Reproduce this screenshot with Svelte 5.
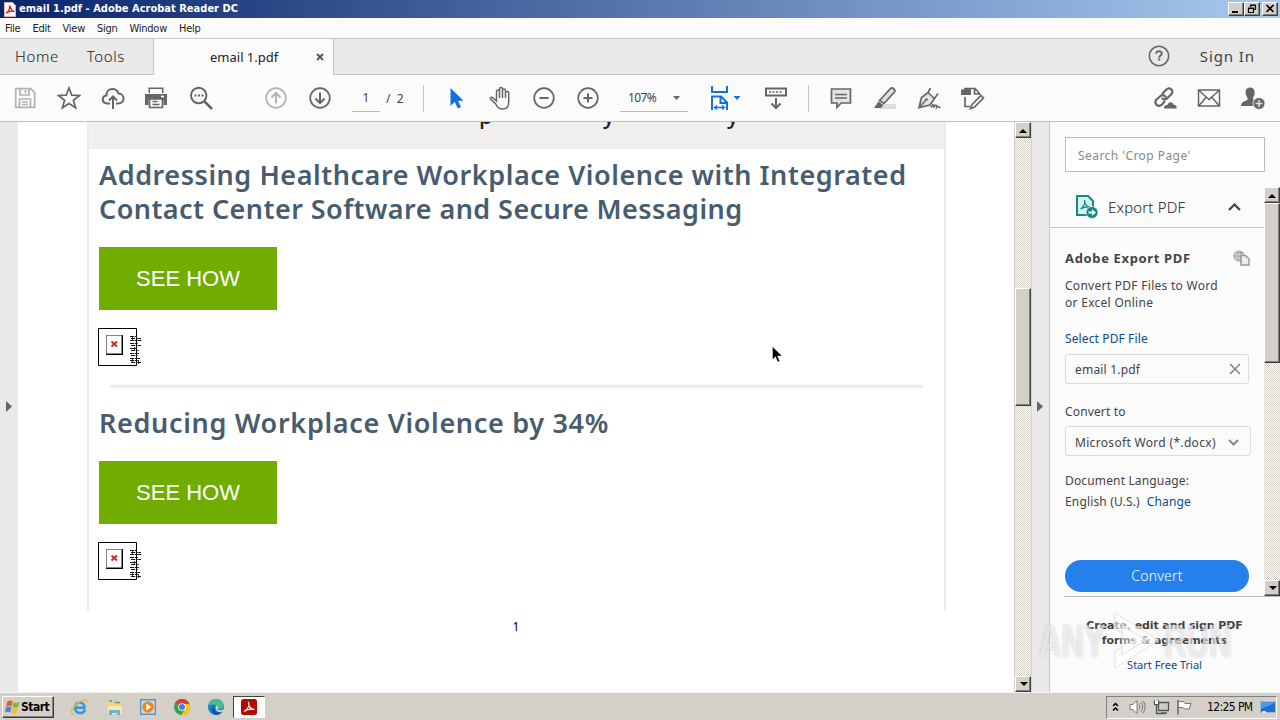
<script>
  const menus = ['File', 'Edit', 'View', 'Sign', 'Window', 'Help'];
</script>

{#snippet arrow(up)}
  <span class="sb-btn"><svg width="9" height="5" viewBox="0 0 9 5"><path d={up ? 'M0 5h8L4 1z' : 'M1 0h8L5 4z'} fill="#000" /></svg></span>
{/snippet}

{#snippet broken()}
  <div class="broken">
    <svg width="46" height="40" viewBox="0 0 46 40">
      <path d="M.5 1.5h38v37H.5z" fill="#fff" stroke="#000" />
      <path d="M8 8h17v20H8z" fill="#000" />
      <path d="M8.500 8.500h15v18h-15z" fill="#fff" stroke="#778c80" />
      <path d="m13.500 14.500 5.500 5m0-5-5.500 5" stroke="#c8282c" stroke-width="2" />
      <g stroke="#111" stroke-width="1.200" fill="none">
        <path d="M32 9.500h7M33 11.500h10M32 13.500h12M32 16.500h8M33 18.500h10M32 21.500h7M33 23.500h8M32 26.500h9M33 28.500h7M32 31.500h10M32 33.500h8M33 35.500h10" stroke-dasharray="4 .7 2 .5" />
        <path d="M34.500 10v4M36.500 20v4M34.500 31v4M40.500 33v4" stroke-width=".8" />
      </g>
    </svg>
  </div>
{/snippet}

<div class="screen">
  <header class="title">
    <svg class="app" width="12" height="15" viewBox="0 0 12 15"><path d="M.5.5h8L11.500 3.500v11H.5z" fill="#fff" stroke="#e7b5ad" /><path d="M2 11C5 9 6 6 5.500 3.500c2 5 3 6 5 6C7 8.500 5 9 2 11z" fill="none" stroke="#c8201c" stroke-width="1.300" /></svg>
    <b>email 1.pdf - Adobe Acrobat Reader DC</b>
    <div class="winbtns">
      <span><svg width="14" height="12"><path d="M3 8h6v2H3z" /></svg></span>
      <span><svg width="14" height="12"><path d="M5.500 4V2.500h5v4H9M5 2h6M3.500 5.500h5v4h-5zM3 5h6" fill="none" stroke="#000" stroke-width="1.200" /></svg></span>
      <span class="close"><svg width="14" height="12"><path d="m3.500 2 7 7m0-7-7 7" stroke="#000" stroke-width="1.700" /></svg></span>
    </div>
  </header>
  <nav class="menu">{#each menus as m}<span>{m}</span>{/each}</nav>

  <div class="tabs">
    <div class="home"><span>Home</span><span class="tools">Tools</span></div>
    <div class="tab"><span>email 1.pdf</span><svg width="8" height="8" viewBox="0 0 8 8"><path d="m1 1 6 6m0-6L1 7" stroke="#555" stroke-width="2" /></svg></div>
    <div class="right">
      <svg width="22" height="22" viewBox="0 0 22 22" fill="none" stroke="#666"><circle cx="11" cy="11" r="9.700" stroke-width="1.600" /><path d="M8.200 8.700c0-3.500 5.600-3.400 5.600-.2 0 2-2.700 2-2.700 4.300" stroke-width="1.900" /><path d="M10 14.500h2.200" stroke-width="2" /></svg>
      <span>Sign In</span>
    </div>
  </div>

  <div class="toolbar">
    <span class="cell dim"><svg viewBox="0 0 24 24"><path d="M2.700 2.700h15l4 4v14.600h-19zM7 3v6h9V3M12.500 4v3M6.500 21v-8h11v8M9 16h6M9 18.500h6" /></svg></span>
    <span class="cell"><svg viewBox="0 0 24 24"><path d="m12 2 2.800 7.200 7.700.3-6.100 4.800 2.200 7.500L12 17.500l-6.600 4.300 2.200-7.500-6.100-4.800 7.700-.3z" /></svg></span>
    <span class="cell"><svg viewBox="0 0 24 24"><path d="M9 17.500H6.500C.5 17.500.3 10 5.500 9.500 5 1.500 16 1 17.500 7.500c6.500.3 7 10-.5 10h-2M12 23V10.500M8 14.500l4-4 4 4" stroke-width="2" /></svg></span>
    <span class="cell"><svg viewBox="0 0 24 24"><path d="M3.500 1.500h15V7h-15zM0 8h22v11h-3.500v-5h-15v5H0z" fill="#666" stroke="none" /><path d="M5 3h12v5H5z" fill="#fbfbfb" stroke="none" /><path d="M4.500 13h13v8.500h-13z" fill="#fbfbfb" /><path d="M7.500 15.500h5M7.500 18.500h7" stroke-width="1.300" /><path d="M16 10.500h3" stroke="#fff" /></svg></span>
    <span class="cell"><svg viewBox="0 0 24 24"><circle cx="9.700" cy="9.500" r="7.700" stroke-width="2" /><path d="m15.500 15.500 7.500 7.500" stroke-width="2.500" /><path d="M5.500 9.500h2m1.500 0h2m1.500 0h2" stroke-width="1.800" /></svg></span>
    <span class="cell dim g1"><svg viewBox="0 0 24 24"><circle cx="12" cy="12" r="9.800" /><path d="M12 17.500V7M7.500 11.500 12 7l4.500 4.500" stroke-width="2" /></svg></span>
    <span class="cell"><svg viewBox="0 0 24 24"><circle cx="12" cy="12" r="9.800" /><path d="M12 6.500V17M7.500 12.500 12 17l4.500-4.500" stroke-width="2" /></svg></span>
    <span class="page">1</span><span class="of">/&nbsp; 2</span>
    <i class="sep s1"></i>
    <span class="cell"><svg viewBox="0 0 24 24"><path d="M6.500 2v18l4.300-4 3 6.500 3.200-1.500-3-6.300h5.500z" fill="#1373d9" stroke="none" /></svg></span>
    <span class="cell"><svg viewBox="0 0 24 24"><path d="M8.500 13.500v-8c0-2 3-2 3 0V3c0-2 3-2 3 0v1.500c0-2 3-2 3 0V7c0-2 3.200-2 3.200 0v9c0 9-10 9-13 2L2.500 13c-.8-1.600 1.300-2.500 2.500-1l3.500 3v-3M11.500 5v7m3-8v8m3-6v6" stroke-width="1.500" /></svg></span>
    <span class="cell"><svg viewBox="0 0 24 24"><circle cx="12" cy="12" r="9.800" /><path d="M7.500 12h9" stroke-width="2" /></svg></span>
    <span class="cell"><svg viewBox="0 0 24 24"><circle cx="12" cy="12" r="9.800" /><path d="M7.500 12h9M12 7.500v9" stroke-width="2" /></svg></span>
    <span class="zoom"><span>107%</span><svg width="7" height="4" viewBox="0 0 7 4"><path d="M0 0h7L3.500 4z" fill="#666" /></svg></span>
    <span class="fit">
      <svg width="32" height="28" viewBox="0 0 32 28" fill="none" stroke="#1473d6" stroke-width="2"><path d="M3 2v6h15V2M3 26V12.500h9l6 6V26M11.500 12.500v6.500H18" /><path d="M5.500 23.500h10M8 21.500l-2.500 2 2.500 2M13 21.500l2.500 2-2.500 2" stroke-width="1.300" /><path d="M24.500 12h7L28 16z" fill="#1473d6" stroke="none" /></svg>
    </span>
    <span class="cell"><svg viewBox="0 0 24 24"><path d="M2 2.500h20v7H2zM12 12v10M7.500 17.500 12 22l4.500-4.500" stroke-width="2" /><path d="M5 6h14" stroke-dasharray="2 1.500" /></svg></span>
    <i class="sep s2"></i>
    <span class="cell"><svg viewBox="0 0 24 24"><path d="M2.500 3h19v14H12l-4 4.500V17H2.500z" fill="#e4e4e4" /><path d="M6 8.500h12M6 12h12" stroke-width="1.500" /></svg></span>
    <span class="cell"><svg viewBox="0 0 24 24"><path d="M11 18h12v5H7z" fill="#ddd" stroke="none" /><path d="m6.500 14.500 11-12c1.500-1.500 5.500 1 4 3.500L11 17.500z" fill="#ddd" /><path d="m5.500 15.500 5 3.500L8 22H1z" fill="#666" stroke="none" /></svg></span>
    <span class="cell"><svg viewBox="0 0 24 24"><path d="M2 21.500 4.500 11.500l6.500-5 6.500 6-4.500 6.500zM11 6.500 13.500 2M17.500 12.500l3.500-5" fill="#e4e4e4" /><path d="m2.500 21 6.500-7" stroke-width="1.400" /><circle cx="9.500" cy="13.500" r="1.300" fill="#666" stroke="none" /><path d="M14 21.500c3-5 3-2 2.500 0 3-5 3-1 3 0 2-3 1 0 4 0" stroke-width="1.500" /></svg></span>
    <span class="cell"><svg viewBox="0 0 24 24"><path d="M0 3.500h3V1.800h7V9H0z" fill="#666" stroke="none" /><path d="M10 2.500h4l4.500 5V9M13.500 3v5h5M4 11v9.500h5" /><path d="m11 18.500 9-9 2.500 2.500-9 9-4 1.500z" stroke-width="1.700" /></svg></span>
    <span class="cell g2"><svg viewBox="0 0 24 24"><path d="m9 8 4.500-4.500c3-3 8 1 5 4.500L14 12.500c-2 1.500-4 1-5-.8M12 15l-3 3.500c-3.500 3.500-9-1-5.500-5L7.500 10c2-1.500 4.500-.8 5.500 1.500" stroke-width="2.200" /><path d="M11 22.500c0-3 1.500-3.500 3.500-3.500.5-3.500 5.500-4 6.200-.2 2.300 0 3 1.200 3 3.700z" fill="#666" stroke="none" /></svg></span>
    <span class="cell"><svg viewBox="0 0 24 24"><path d="M1.500 4h21v16h-21zM2 4.500l10 9 10-9M2 19.500l7-8M22 19.500l-7-8" stroke-width="1.500" /></svg></span>
    <span class="cell"><svg viewBox="0 0 24 24"><path d="M9 1.500c-3.500 0-5.200 3-4 7.200.5 1.800 1.700 3 1.700 4.500C5.500 15.500 0 14.500 0 20h13c0-3 .5-5 2.500-6-2.500 0-3.500-.5-3.500-1.500 0-1.500 1.300-2.500 1.500-4C14 4 12.500 1.500 9 1.500z" fill="#666" stroke="none" /><circle cx="18" cy="17.500" r="6" fill="#666" stroke="#fbfbfb" stroke-width=".8" /><path d="M14.500 17.500h7M18 14v7" stroke="#ddd" stroke-width="1.600" /></svg></span>
  </div>

  <main>
    <aside class="strip"><svg width="6" height="12"><path d="M0 0v11l6-5.500z" fill="#666" /></svg></aside>
    <section class="doc">
      <div class="mail">
        <div class="banner"><span>p</span><span>y</span><span>y</span></div>
        <h2>Addressing Healthcare Workplace Violence with Integrated<br /><span class="l2">Contact Center Software and Secure Messaging</span></h2>
        <a class="cta">SEE HOW</a>
        {@render broken()}
        <hr />
        <h2 class="second">Reducing Workplace Violence by 34%</h2>
        <a class="cta">SEE HOW</a>
        {@render broken()}
      </div>
      <div class="num">1</div>
    </section>
    <div class="sb main-sb">{@render arrow(true)}<span class="thumb"></span><span class="grow"></span>{@render arrow(false)}</div>
    <div class="split"><svg width="6" height="12"><path d="M0 0v11l6-5.500z" fill="#666" /></svg></div>
    <aside class="panel">
      <div class="search">Search 'Crop Page'</div>
      <div class="scroll">
        <div class="content">
          <div class="export">
            <svg width="23" height="24" viewBox="0 0 23 24"><path d="M1 1h11l5 5v14H1z" fill="#d5f2f0" stroke="#16878a" stroke-width="2" /><path d="M4.500 14C8 12 9 8 8.500 5c.5 5 2 7 5.500 7-4-.5-6 .2-9.500 2z" fill="none" stroke="#16878a" stroke-width="1.200" /><circle cx="16" cy="17.500" r="6" fill="#16878a" stroke="#fbfbfb" stroke-width=".6" /><path d="M12.500 16.500h3.500v-2.300l4 3.300-4 3.300v-2.300h-3.500z" fill="#fff" /></svg>
            <span>Export PDF</span>
            <svg class="chev" width="13" height="8" viewBox="0 0 13 8"><path d="m1 7 5.500-5.500L12 7" fill="none" stroke="#444" stroke-width="2.200" /></svg>
          </div>
          <div class="body">
            <div class="head"><b>Adobe Export PDF</b><svg width="17" height="16" viewBox="0 0 17 16"><circle cx="6" cy="6" r="5.500" fill="#a2a2a2" /><path d="M1 4.500h10M1 8h10M6 1v10M3.500 1.500v9" stroke="#ddd" stroke-width=".8" /><path d="M8 5.500h4.500l3.500 3.500v6H8z" fill="#eee" stroke="#999" stroke-width="1.500" /></svg></div>
            <p class="desc">Convert PDF Files to Word<br />or Excel Online</p>
            <a class="select">Select PDF File</a>
            <div class="field"><span>email 1.pdf</span><svg width="12" height="12"><path d="m1 1 10 10m0-10L1 11" stroke="#888" stroke-width="1.700" /></svg></div>
            <div class="label to">Convert to</div>
            <div class="field dd"><span>Microsoft Word (*.docx)</span><svg width="11" height="7"><path d="m1 1 4.500 4.500L10 1" fill="none" stroke="#888" stroke-width="2" /></svg></div>
            <div class="label lang">Document Language:</div>
            <div class="label eng"><span>English (U.S.)</span><a>Change</a></div>
            <button>Convert</button>
          </div>
        </div>
        <div class="sb side-sb">{@render arrow(true)}<span class="thumb"></span><span class="grow"></span>{@render arrow(false)}</div>
      </div>
      <footer><b>Create, edit and sign PDF</b><b class="f2">forms &amp; agreements</b><a>Start Free Trial</a></footer>
    </aside>
  </main>

  <div class="taskbar">
    <div class="start">
      <svg width="16" height="16" viewBox="0 0 16 16"><path d="M2.500 2.500C4.500 1 6 1.500 7.500 2.500L6.500 7.500C5 6.500 3 6.500 1 7.500z" fill="#e8582a" /><path d="M8.500 3c2 1 4 1 6-.3l-1.200 5C11.500 9 9.500 9 7.500 8z" fill="#7cb93c" /><path d="M1 8.500c2-1.300 4-1 5.200 0l-1 5C3.500 12.500 2 12.300 0 13.500z" fill="#3d86d8" /><path d="M7.200 9c2 1 4 1 6-.2l-1.200 5c-2 1.200-4 1.200-6 .2z" fill="#f5bd27" /></svg>
      <b>Start</b>
    </div>
    <span class="tk"><svg width="18" height="18" viewBox="0 0 18 18"><path d="M14 11.500c-1 5-10 5-10-2s9.500-6.500 9.500.2H5" fill="none" stroke="#2d9bdc" stroke-width="2.600" /><path d="M3 15.500C-1.500 17-.5 11 5 6.500S17-.5 16 4.500" fill="none" stroke="#edb93b" stroke-width="1.500" /></svg></span>
    <span class="tk"><svg width="17" height="17" viewBox="0 0 17 17"><path d="M1 3h5l1 2h8v10H1z" fill="#edd281" /><path d="M3 2h3M9 3.500h5" stroke="#55a667" stroke-width="1.500" /><path d="M2 7h14v8H2z" fill="#f7e9aa" /><path d="M3 16v-5h11v5h-3v-2H6v2z" fill="#67b5dc" /></svg></span>
    <span class="tk"><svg width="16" height="16" viewBox="0 0 16 16"><path d="M.7.7h14.600v14.600H.7z" fill="#c4def1" stroke="#5c93c6" stroke-width="1.400" /><circle cx="8" cy="8" r="5.700" fill="#f08419" /><path d="m6.300 4.500 5 3.500-5 3.500z" fill="#fff" /></svg></span>
    <span class="tk"><svg width="16" height="16" viewBox="0 0 16 16"><circle cx="8" cy="8" r="8" fill="#34a34b" /><path d="M8 8 1.100 4A8 8 0 0 1 15 4.200L15 5H8z" fill="#df3c31" /><path d="M8 5h7.400A8 8 0 0 1 7.500 16L11 9.500z" fill="#fcc817" /><circle cx="8" cy="8" r="3.800" fill="#fff" /><circle cx="8" cy="8" r="3" fill="#3f7fea" /></svg></span>
    <span class="tk"><svg width="16" height="16" viewBox="0 0 16 16"><circle cx="8" cy="8" r="8" fill="#1680cf" /><path d="M.3 6.500C1.500-1.500 13-2 15.500 5c1.300 4-2.500 6-6 5 1.500-4-3-6-9.200-3.500z" fill="#42bf91" /><path d="M6 7.500c-1 4 3 7 8.500 5C12.500 16 7 17 4.500 13.500 3 11 4 8.500 6 7.500z" fill="#0c54a2" /><path d="M8 6.500c2.500.5 2.500 2 1.500 3.500 1 2 5 1.500 6.500 0v1.500l-1.500 1.500C10 14 6.500 11.500 8 6.500z" fill="#d4d0c8" /></svg></span>
    <span class="active"><svg width="16" height="16" viewBox="0 0 16 16"><rect width="16" height="16" rx="2.500" fill="#b30b00" /><path d="M3 12.500c4-2 5.500-6 4.500-9.500 0 4 2 7 6 7.500-4-1-7.500 0-10.500 2z" fill="none" stroke="#fff" stroke-width="1.200" /></svg></span>
    <div class="tray">
      <svg class="t1" width="7" height="10" viewBox="0 0 7 10"><path d="m1 4 2.500-2.500L6 4M1 8.500 3.500 6 6 8.500" fill="none" stroke="#000" stroke-width="1.500" /></svg>
      <svg width="17" height="16" viewBox="0 0 17 16" stroke="#777" fill="none"><path d="M1 5.500h3l4-4v13l-4-4H1z" fill="#fff" /><path d="M10 5.500q2 2.500 0 5M12 3.500q3.500 4.500 0 9M14 2q4.500 6 0 12" /></svg>
      <svg class="t3" width="17" height="16" viewBox="0 0 17 16"><path d="M5.500 3.500h10v8h-10z" fill="#ccc" stroke="#555" stroke-width="1.300" /><path d="M1.500 1.500v4h4v-4M3.500 5v9.500h9M8 14h6" fill="none" stroke="#555" stroke-width="1.300" /><path d="M2 2h3v3H2z" fill="#fff" /></svg>
      <svg class="t4" width="17" height="16" viewBox="0 0 17 16"><path d="M2.500 2.500h5l1.500 2h6l-2 5.500H8.500L7 8.500H2.500" fill="#fff" stroke="#777" /><path d="M2 1v14.500" stroke="#555" stroke-width="1.300" /></svg>
      <span>12:25 PM</span>
      <svg class="t5" width="16" height="13" viewBox="0 0 16 13"><path d="M.5.5h15v11H.5z" fill="#246cc8" stroke="#97b9dc" /><path d="M1 8 15 2V1H1z" fill="#4d97e4" /><path d="M2 11h4" stroke="#fff" stroke-width="1.500" /></svg>
    </div>
  </div>

  <div class="mark"><span>ANY</span><svg width="56" height="64" viewBox="0 0 56 64"><path d="M7 4 51 31 7 59V42l21-11L7 20z" fill="#fff" fill-opacity=".55" stroke="#ddd" stroke-opacity=".8" /><path d="M14 16 38 31 14 46z" fill="#fff" fill-opacity=".45" stroke="#ddd" /></svg><span>RUN</span></div>
  <svg class="cursor" width="11" height="17" viewBox="0 0 11 17"><path d="M.5.5v13l3-2.800 2.200 5.300 2-.9-2.200-5H10z" fill="#000" stroke="#fff" stroke-width=".4" /></svg>
</div>

<style>
  :global(body) { margin: 0; overflow: hidden; }
  .screen { width: 1280px; height: 720px; position: relative; display: flex; flex-direction: column; background: #fbfbfb; font-family: "Noto Sans", sans-serif; color: #444; overflow: hidden; box-sizing: border-box; }
  .screen :global(*) { box-sizing: border-box; }
  svg { display: block; flex: none; }
  span, b, a { white-space: nowrap; }
  .title { height: 18px; flex: none; display: flex; align-items: center; background: linear-gradient(90deg, #0a246a, #a6caf0); color: #fff; padding: 0 2px 0 4px; font: 11px/18px "DejaVu Sans Condensed", sans-serif; }
  .app { margin-right: 3px; }
  .title b { letter-spacing: .01px; }
  .winbtns { margin-left: auto; display: flex; }
  .winbtns span, .sb-btn { background: #d4d0c8; border: 1px solid; border-color: #fff #404040 #404040 #fff; box-shadow: inset -1px -1px #808080; }
  .winbtns span { width: 16px; height: 14px; }
  .winbtns .close { margin-left: 2px; }
  .menu { height: 20px; flex: none; display: flex; align-items: center; gap: 12px; padding: 1px 0 0 5px; font: 11px/18px "DejaVu Sans Condensed", sans-serif; letter-spacing: -.26px; color: #222; }
  .tabs { height: 37px; flex: none; display: flex; border-top: 1px solid #c6c6c6; background: #e9e9e9; font-size: 15px; }
  .home { width: 154px; display: flex; align-items: center; padding: 0 0 1px 15px; border-right: 1px solid #c6c6c6; border-bottom: 1px solid #c6c6c6; letter-spacing: .6px; font-weight: 300; color: #222; }
  .home .tools { margin-left: 28px; }
  .tab { width: 180px; display: flex; align-items: center; padding: 0 9px 0 56px; justify-content: space-between; background: #fbfbfb; font-size: 13px; color: #222; border-right: 1px solid #c6c6c6; }
  .right { flex: 1; display: flex; align-items: center; justify-content: flex-end; border-bottom: 1px solid #c6c6c6; padding-right: 25px; gap: 30px; padding-bottom: 1px; letter-spacing: .9px; }
  .toolbar { height: 47px; flex: none; display: flex; align-items: center; padding-left: 3px; border-bottom: 1px solid #bfc1c1; font-size: 12px; }
  .cell { width: 44px; height: 44px; flex: none; display: flex; align-items: center; justify-content: center; }
  .cell svg { width: 24px; height: 24px; fill: none; stroke: #666; stroke-width: 1.7; }
  .dim svg { stroke: #b3b3b3; }
  .g1 { margin-left: 31px; }
  .g2 { margin-left: 148px; }
  .page { width: 28px; height: 27px; margin-left: 10px; border-bottom: 1px solid #bbb; line-height: 26px; text-align: center; }
  .of { width: 37px; padding-left: 6px; margin-left: 0; }
  .sep { width: 1px; height: 27px; background: #c5c5c5; flex: none; }
  .s1 { margin-left: 6px; margin-right: 10px; }
  .s2 { margin-left: 10px; margin-right: 10px; }
  .zoom { width: 68px; height: 27px; margin-left: 10px; display: flex; align-items: center; justify-content: space-between; padding: 0 8px 0 8px; border-bottom: 1px solid #bbb; font-size: 12px; letter-spacing: -.6px; }
  .fit { width: 45px; margin-left: 21px; }
  main { height: 570px; flex: none; display: flex; }
  .strip { width: 18px; background: #e9e9e9; padding: 279px 0 0 6px; }
  .doc { width: 996px; background: #fff; padding-left: 69px; overflow: hidden; }
  .mail { width: 859px; height: 489px; border: solid #ebebeb; border-width: 0 2px; padding: 0 10px; }
  .banner { height: 27px; margin: 0 -10px 9px; background: #f2f0ee; overflow: hidden; display: flex; padding-left: 390px; gap: 110px; font: 500 22px/30px "Noto Sans"; color: #222; }
  .banner span { margin-top: -22px; width: 14px; }
  h2 { margin: 0; font: 600 27px/34px "Noto Sans", sans-serif; color: #475c6e; letter-spacing: .55px; white-space: nowrap; }
  .l2 { letter-spacing: .44px; }
  .cta { display: block; width: 178px; height: 63px; margin-top: 21px; background: #70ad00; color: #fff; font: 22px/63px "Liberation Sans", sans-serif; text-align: center; }
  .broken { margin: 17px 0 0 -1px; height: 40px; }
  hr { margin: 18px 11px 0 11px; border: 0; height: 3px; background: #ededed; }
  .second { margin-top: 18px; letter-spacing: .68px; }
  .num { width: 858px; text-align: center; font: 12px/32px "Noto Sans"; color: #000; }
  .sb { display: flex; flex-direction: column; background: repeating-conic-gradient(#d4d0c8 0 25%, #fff 0 50%) 0 0 / 2px 2px; }
  .sb-btn { height: 16px; flex: none; display: flex; align-items: center; justify-content: center; }
  .thumb { background: #d4d0c8; border: 1px solid; border-color: #fff #404040 #404040 #fff; box-shadow: inset -1px -1px #808080; }
  .grow { flex: 1; }
  .main-sb { width: 17px; border-left: 1px solid #d4d0c8; }
  .main-sb .thumb { margin-top: 150px; height: 118px; }
  .split { width: 18px; background: #e9e9e9; padding: 279px 0 0 5px; border-left: 1px solid #d5d5d5; }
  .panel { width: 231px; border-left: 1px solid #c6c6c6; display: flex; flex-direction: column; }
  .search { width: 200px; height: 35px; margin: 15px 0 15px 15px; flex: none; background: #fff; border: 1px solid #bbb; padding-left: 12px; font-size: 12px; line-height: 35px; color: #888; letter-spacing: .45px; }
  .scroll { height: 409px; flex: none; display: flex; }
  .content { width: 214px; }
  .side-sb { width: 16px; }
  .side-sb .thumb { height: 160px; }
  .export { height: 41px; display: flex; align-items: center; border-bottom: 1px solid #c6c6c6; padding-left: 26px; font-size: 15px; font-weight: 300; color: #222; }
  .export span { margin-left: 9px; width: 120px; letter-spacing: .15px; }
  .body { width: 201px; padding-left: 15px; font-size: 12px; }
  .head { display: flex; justify-content: space-between; align-items: center; height: 20px; margin-top: 20px; width: 185px; font-size: 13px; }
  .head b { letter-spacing: .65px; }
  .desc { margin: 9px 0 19px; line-height: 17px; letter-spacing: .28px; }
  a { color: #0d4a8d; }
  .select { display: block; line-height: 18px; letter-spacing: .12px; }
  .field { width: 184px; height: 30px; margin-top: 6px; border: 1px solid #dcdcdc; border-radius: 3px; display: flex; align-items: center; justify-content: space-between; padding: 0 7px 0 9px; letter-spacing: .2px; }
  .label { line-height: 18px; letter-spacing: .15px; }
  .to { margin-top: 19px; }
  .dd { width: 186px; margin-top: 5px; padding: 2px 11px 0 9px; letter-spacing: .32px; }
  .lang { margin-top: 16px; }
  .eng { margin-top: 3px; display: flex; gap: 7px; }
  button { display: block; width: 184px; height: 32px; margin-top: 49px; border: 0; border-radius: 16px; background: #2680eb; color: #fff; font: 300 14px "Noto Sans"; padding: 0 0 1px; letter-spacing: .2px; }
  footer { margin-left: 14px; border-top: 1px solid #bbb; flex: 1; display: flex; flex-direction: column; align-items: center; padding: 21px 15px 0 0; font: 11px/15px "DejaVu Sans", sans-serif; width: 216px; }
  footer b { letter-spacing: -.1px; }
  footer a { font: 11px/18px "Noto Sans"; margin-top: 8px; }
  .taskbar { height: 28px; flex: none; display: flex; align-items: center; background: #d4d0c8; border-top: 1px solid #f4f2ee; padding: 1px 3px 0 2px; color: #000; }
  .start { width: 52px; height: 22px; margin-right: 9px; padding-left: 2px; display: flex; align-items: center; gap: 0; border: 1px solid; border-color: #fff #404040 #404040 #fff; box-shadow: inset -1px -1px #808080; font: 12px "DejaVu Sans Condensed", sans-serif; letter-spacing: -.5px; }
  .tk { width: 34px; display: flex; justify-content: center; }
  .active { width: 32px; height: 22px; display: flex; align-items: center; justify-content: center; background: #fff; border: 1px solid; border-color: #404040 #fff #fff #404040; }
  .tray { margin-left: auto; width: 171px; height: 23px; border: 1px solid; border-color: #808080 #fff #fff #808080; display: flex; align-items: center; padding-left: 5px; font: 12px "DejaVu Sans Condensed", sans-serif; letter-spacing: -.6px; }
  .t1 { margin-right: 10px; }
  .t3 { margin-left: 7px; }
  .t4 { margin-left: 6px; margin-right: 14px; }
  .t5 { margin-left: auto; }
  .mark { position: absolute; left: 1039px; top: 609px; height: 64px; display: flex; align-items: center; font: 700 46px/64px "Liberation Sans", sans-serif; color: rgba(255,255,255,.6); text-shadow: 0 0 3px rgba(0,0,0,.2); }
  .mark span { width: 69px; transform: scaleX(.68); transform-origin: 0 50%; }
  .cursor { position: absolute; left: 772px; top: 346px; }
</style>
